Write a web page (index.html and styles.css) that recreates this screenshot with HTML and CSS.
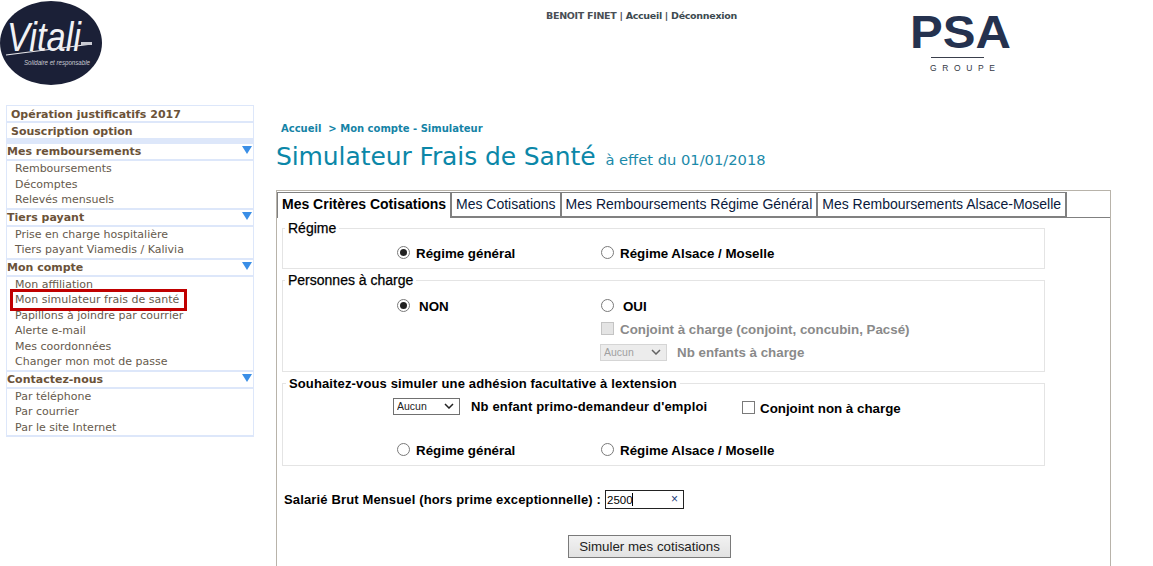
FILE: index.html
```html
<!DOCTYPE html>
<html lang="fr">
<head>
<meta charset="utf-8">
<title>Simulateur Frais de Santé</title>
<link rel="stylesheet" href="styles.css">
</head>
<body>
<header class="top">
  <svg class="logo-vitali" width="103" height="86" viewBox="0 0 103 86" role="img" aria-label="Vitali">
    <ellipse cx="51" cy="43" rx="51" ry="42" fill="#1b2037"/>
    <text class="v-name" x="7" y="51" textLength="74" lengthAdjust="spacingAndGlyphs">Vitali</text>
    <path d="M6 55 L92 44" stroke="#e8e8ec" stroke-width="1.2" fill="none"/>
    <rect x="81" y="42" width="11" height="3" fill="#c9cad2"/>
    <text class="v-sub" x="24" y="65" textLength="66" lengthAdjust="spacingAndGlyphs">Solidaire et responsable</text>
  </svg>
  <div class="userbar"><b>BENOIT FINET</b> | <a>Accueil</a> | <a>Déconnexion</a></div>
  <svg class="logo-psa" width="108" height="70" viewBox="0 0 108 70" role="img" aria-label="PSA Groupe">
    <text class="p-name" x="1" y="43" textLength="101" lengthAdjust="spacingAndGlyphs">PSA</text>
    <rect x="22" y="52" width="53" height="1" fill="#3a3f4c"/>
    <text class="p-sub" x="21" y="66" textLength="65">GROUPE</text>
  </svg>
</header>

<div class="page">
  <nav class="side">
    <a class="solo">Opération justificatifs 2017</a>
    <a class="solo">Souscription option</a>
    <div class="band"></div>
    <h3>Mes remboursements</h3>
    <ul>
      <li>Remboursements</li>
      <li>Décomptes</li>
      <li>Relevés mensuels</li>
    </ul>
    <h3>Tiers payant</h3>
    <ul>
      <li>Prise en charge hospitalière</li>
      <li>Tiers payant Viamedis / Kalivia</li>
    </ul>
    <h3>Mon compte</h3>
    <ul>
      <li>Mon affiliation</li>
      <li><span class="mark">Mon simulateur frais de santé</span></li>
      <li>Papillons à joindre par courrier</li>
      <li>Alerte e-mail</li>
      <li>Mes coordonnées</li>
      <li>Changer mon mot de passe</li>
    </ul>
    <h3>Contactez-nous</h3>
    <ul>
      <li>Par téléphone</li>
      <li>Par courrier</li>
      <li>Par le site Internet</li>
    </ul>
  </nav>

  <main class="content">
    <p class="crumb">Accueil &nbsp;&gt; Mon compte - Simulateur</p>
    <h1>Simulateur Frais de Santé <small>à effet du 01/01/2018</small></h1>

    <section class="panel">
      <div class="tabs">
        <span class="tab active">Mes Critères Cotisations</span>
        <span class="tab">Mes Cotisations</span>
        <span class="tab">Mes Remboursements Régime Général</span>
        <span class="tab">Mes Remboursements Alsace-Moselle</span>
      </div>

      <form class="form">
        <fieldset class="fs fs-regime">
          <legend>Régime</legend>
          <div class="row">
            <label class="opt"><input type="radio" name="r1" checked><span>Régime général</span></label>
            <label class="opt"><input type="radio" name="r1"><span>Régime Alsace / Moselle</span></label>
          </div>
        </fieldset>

        <fieldset class="fs fs-pers">
          <legend>Personnes à charge</legend>
          <div class="row">
            <label class="opt wide"><input type="radio" name="r2" checked><span>NON</span></label>
            <label class="opt wide"><input type="radio" name="r2"><span>OUI</span></label>
          </div>
          <div class="row sub">
            <label class="opt off"><input type="checkbox" disabled><span>Conjoint à charge (conjoint, concubin, Pacsé)</span></label>
          </div>
          <div class="row sub">
            <label class="opt off kids"><select disabled><option>Aucun</option></select><span>Nb enfants à charge</span></label>
          </div>
        </fieldset>

        <fieldset class="fs fs-ext">
          <legend>Souhaitez-vous simuler une adhésion facultative à lextension</legend>
          <div class="ext-top">
            <label class="opt primo"><select><option>Aucun</option></select><span>Nb enfant primo-demandeur d'emploi</span></label>
            <label class="opt nocharge"><input type="checkbox"><span>Conjoint non à charge</span></label>
          </div>
          <div class="row">
            <label class="opt"><input type="radio" name="r3"><span>Régime général</span></label>
            <label class="opt"><input type="radio" name="r3"><span>Régime Alsace / Moselle</span></label>
          </div>
        </fieldset>

        <div class="salary">
          <label for="sal">Salarié Brut Mensuel (hors prime exceptionnelle) :</label>
          <div class="field"><input id="sal" type="text" value="2500"><i class="caret"></i><i class="clear">×</i></div>
        </div>
        <div class="actions"><button type="button">Simuler mes cotisations</button></div>
      </form>
    </section>
  </main>
</div>
</body>
</html>
```

FILE: styles.css
```css
* { box-sizing: border-box; }
html, body { height: 100%; overflow: hidden; }
body { margin: 0; background: #fff; font-family: "Liberation Sans", Arial, sans-serif; color: #000; }

.top { display: flex; align-items: flex-start; height: 105px; }
.logo-vitali { display: block; flex: none; margin-right: 443px; }
.v-name { font: italic 400 40px "Liberation Sans", sans-serif; fill: #f2f2f5; }
.v-sub { font: italic 400 7px "Liberation Sans", sans-serif; fill: #c8c9d2; }
.userbar { flex: none; width: 191px; margin-top: 10px; white-space: nowrap; font: 700 9.5px/12px "DejaVu Sans", Verdana, sans-serif; color: #4a4f55; letter-spacing: -0.3px; }
.userbar a { color: #3c4a50; }
.logo-psa { display: block; flex: none; margin: 5px 0 0 172px; }
.p-name { font: 700 46px "Liberation Sans", sans-serif; fill: #25324f; }
.p-sub { font: 400 8.5px "Liberation Sans", sans-serif; fill: #333845; }

.page { display: flex; align-items: flex-start; padding-left: 6px; }

.side { flex: none; width: 248px; font: 11px/15.5px "DejaVu Sans", Verdana, sans-serif; color: #665a4c; }
.solo { display: block; height: 17px; padding-left: 4px; border: 1px solid #dde7fa; font-weight: 700; line-height: 17px; color: #6b5238; }
.band { height: 5px; background: #dde7fa; }
.side h3 { position: relative; margin: 0; height: 15px; padding-left: 0; border-left: 1px solid #dde7fa; border-right: 1px solid #dde7fa; font-size: 11px; line-height: 16px; color: #6b5238; font-weight: 700; }
.side h3::after { content: ""; position: absolute; right: 1px; top: 2px; border-left: 5px solid transparent; border-right: 5px solid transparent; border-top: 8px solid #3a8ee6; }
.side ul { margin: 0; padding: 0 0 0 8px; list-style: none; border: 1px solid #dde7fa; border-width: 2px 1px; }
.side li { height: 15.5px; white-space: nowrap; }
.mark { position: relative; display: inline-block; }
.mark::after { content: ""; position: absolute; left: -5px; right: -8px; top: -3px; bottom: -3px; border: 3px solid #c00000; }

.content { flex: none; width: 835px; margin-left: 22px; }
.crumb { margin: 18px 0 0 5px; font: 700 10px/12px "DejaVu Sans", Verdana, sans-serif; color: #1583a6; }
h1 { margin: 6px 0 0; font: 400 25px/32px "DejaVu Sans", Verdana, sans-serif; color: #0b87a8; white-space: nowrap; letter-spacing: -.1px; }
h1 small { font-size: 14.7px; margin-left: 2px; color: #1b8aa9; letter-spacing: 0; }

.panel { margin-top: 14px; height: 500px; border: 1px solid #b8b3aa; padding-top: 1px; }
.tabs { display: flex; height: 26px; border-bottom: 1px solid #808080; font-size: 14px; line-height: 23px; color: #0a1a3c; }
.tab { height: 26px; padding: 0 4px; border: solid #808080; border-width: 1px 2px 2px 0; white-space: nowrap; }
.tab.active { font-weight: 700; color: #000; border-left-width: 1px; border-bottom: 0; width: 175px; background: #fff; position: relative; }

.form { padding: 0 5px; font-weight: 700; font-size: 13.33px; }
.fs { width: 763px; margin: 0; padding: 0; border: 1px solid #e4e4e4; min-inline-size: 0; }
.fs legend { margin-left: 2px; padding: 0 3px; font-size: 14px; font-weight: 400; line-height: 15px; color: #000; -webkit-text-stroke: .25px #000; }
.fs-regime { margin-top: 3px; height: 48px; }
.fs-pers { margin-top: 4px; height: 99px; }
.fs-ext { margin-top: 4px; height: 90px; }
.fs-ext legend { font-size: 13px; font-weight: 700; -webkit-text-stroke: 0; letter-spacing: .01em; margin-left: 3px; }

.row { display: grid; grid-template-columns: 204px auto; justify-content: start; padding-left: 114px; }
.fs-regime .row { padding-top: 8px; }
.fs-pers .row:first-of-type { padding-top: 9px; }
.row.sub { grid-template-columns: auto; padding-left: 317px; }
.opt { display: flex; align-items: center; height: 18px; }
.opt span { display: block; }
.opt input { appearance: none; flex: none; width: 13px; height: 13px; margin: 0 6px 0 0; border: 1px solid #7a7a7a; background: #fff; position: relative; top: -1px; }
.opt input[type=radio] { border-radius: 50%; }
.opt input[type=radio]:checked::after { content: ""; position: absolute; left: 2px; top: 2px; width: 7px; height: 7px; border-radius: 50%; background: #222; }
.opt.wide span { margin-left: 3px; }
.off { color: #8a8a8a; }
.off input { background: #e4e4e4; border-color: #c4c4c4; margin-left: 1px; }
.sub { margin-top: 5px; }
.sub + .sub { margin-top: 5px; }

select { appearance: none; width: 67px; height: 17px; padding: 0 0 0 3px; border: 1px solid #707070; border-radius: 0; background: #fff url("data:image/svg+xml,%3Csvg xmlns='http://www.w3.org/2000/svg' width='10' height='6'%3E%3Cpath d='M1 1l4 4 4-4' fill='none' stroke='%23222' stroke-width='1.5'/%3E%3C/svg%3E") no-repeat right 5px center; font: 400 10.5px "Liberation Sans", sans-serif; color: #222; }
select:disabled { background-color: #e4e4e4; border-color: #c4c4c4; color: #777; }
.kids select { margin-right: 10px; }
.ext-top { display: flex; height: 50px; padding-left: 110px; padding-top: 6px; }
.primo { width: 349px; }
.primo select { margin-right: 11px; flex: none; }
.primo span { font-size: 13px; letter-spacing: .013em; }
.nocharge { margin-top: 2px; }
.nocharge input { margin-right: 5px; }

.salary { display: flex; align-items: center; margin: 24px 0 0 2px; height: 19px; font-size: 13px; }
.salary label { letter-spacing: .011em; margin-right: 4px; white-space: nowrap; }
.field { position: relative; width: 79px; height: 19px; flex: none; }
.field input { display: block; width: 100%; height: 100%; padding: 0 0 0 1px; border: 1px solid #222; border-radius: 0; outline: none; font: 400 11.5px "Liberation Sans", sans-serif; color: #000; }
.caret { position: absolute; left: 27px; top: 3px; width: 1px; height: 13px; background: #000; }
.clear { position: absolute; right: 6px; top: 1px; font: 400 12px/16px "Liberation Sans", sans-serif; color: #1a3a7a; }

.actions { margin-top: 26px; padding-left: 286px; }
button { display: block; width: 163px; height: 23px; padding: 0; border: 1px solid #7a7a7a; border-radius: 0; background: linear-gradient(#f2f2f2, #e2e2e2); font: 400 13.33px "Liberation Sans", sans-serif; color: #222; }
```
